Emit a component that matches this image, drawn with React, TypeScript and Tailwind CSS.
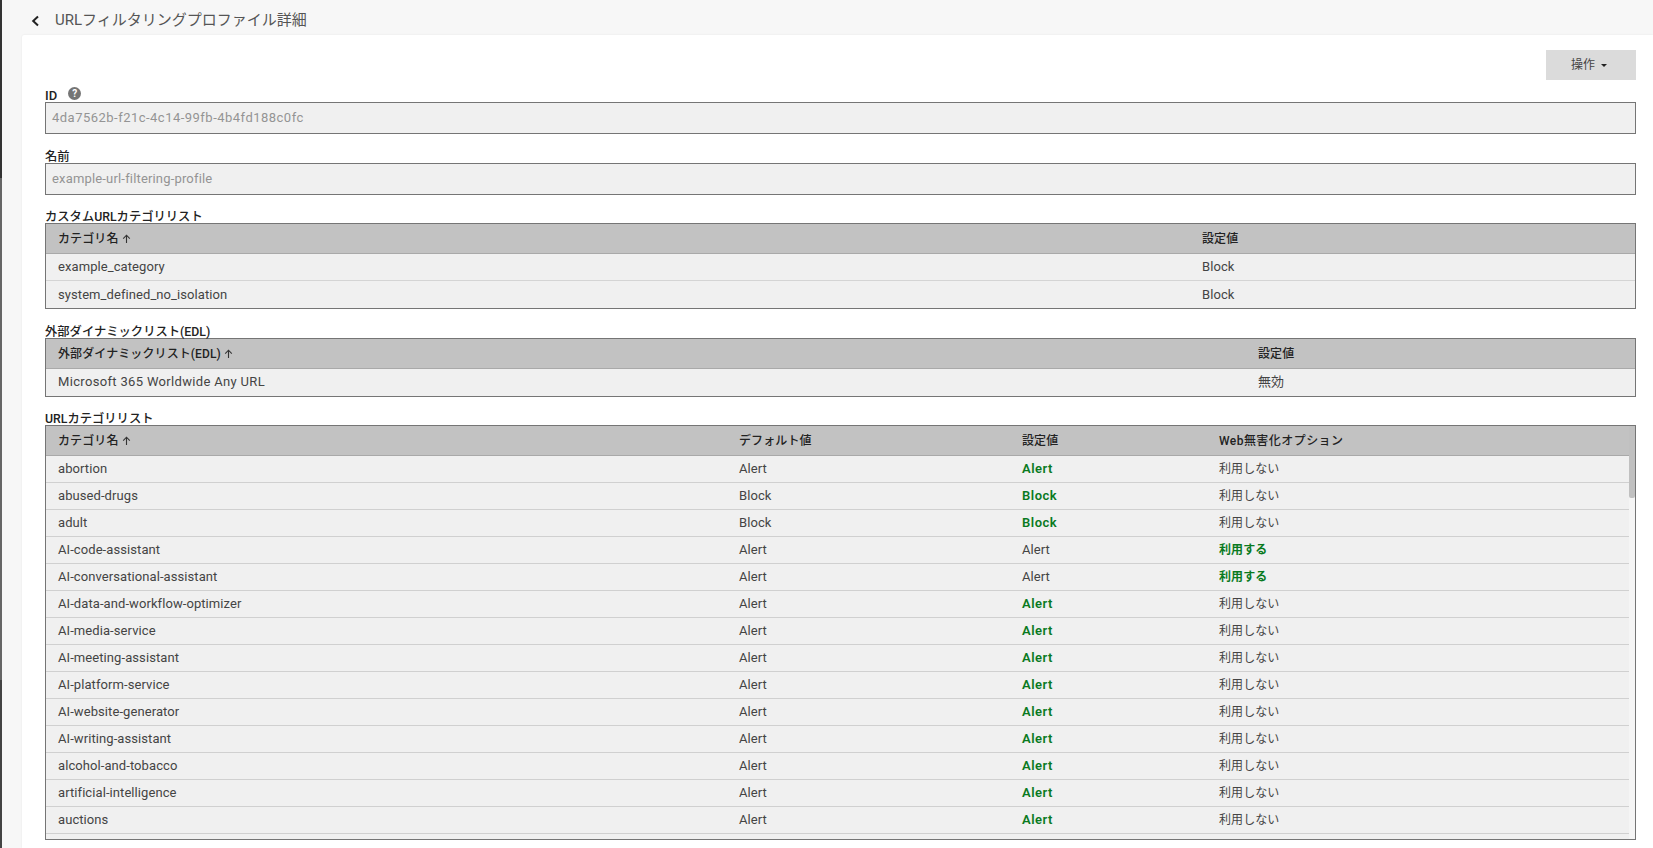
const rows: [string, string, string, boolean, string, boolean][] = [
  ["abortion", "Alert", "Alert", true, "利用しない", false],
  ["abused-drugs", "Block", "Block", true, "利用しない", false],
  ["adult", "Block", "Block", true, "利用しない", false],
  ["AI-code-assistant", "Alert", "Alert", false, "利用する", true],
  ["AI-conversational-assistant", "Alert", "Alert", false, "利用する", true],
  ["AI-data-and-workflow-optimizer", "Alert", "Alert", true, "利用しない", false],
  ["AI-media-service", "Alert", "Alert", true, "利用しない", false],
  ["AI-meeting-assistant", "Alert", "Alert", true, "利用しない", false],
  ["AI-platform-service", "Alert", "Alert", true, "利用しない", false],
  ["AI-website-generator", "Alert", "Alert", true, "利用しない", false],
  ["AI-writing-assistant", "Alert", "Alert", true, "利用しない", false],
  ["alcohol-and-tobacco", "Alert", "Alert", true, "利用しない", false],
  ["artificial-intelligence", "Alert", "Alert", true, "利用しない", false],
  ["auctions", "Alert", "Alert", true, "利用しない", false],
];

const font = { fontFamily: '"Roboto","Noto Sans CJK JP",sans-serif' };

function Arrow() {
  return (
    <svg width="9" height="10" viewBox="0 0 9 10" className="ml-[3px] inline-block align-[-1px] text-[#333]">
      <path d="M4.5 9V1.5M1.2 4.6 4.5 1.2 7.8 4.6" fill="none" stroke="currentColor" strokeWidth="1.1" />
    </svg>
  );
}

function Label({ children }: { children: React.ReactNode }) {
  return <div className="h-[14px] text-[12.3px] leading-[16px] font-medium text-[#222]">{children}</div>;
}

function Field({ value, spacing }: { value: string; spacing: string }) {
  return (
    <div className={`flex h-[32px] items-center border border-[#757575] bg-[#f0f0f0] pl-[6px] text-[13px] text-[#949494] ${spacing}`}>
      {value}
    </div>
  );
}

function Simple({ cols, head, data, spaced }: { cols: string; head: string; data: string[][]; spaced?: boolean }) {
  return (
    <div className="border border-[#757575] bg-[#f0f0f0] text-[13px] tracking-[0.08px] text-[#444]">
      <div className={`grid h-[30px] items-center border-b border-[#a9a9a9] bg-[#c2c2c2] pl-[12px] pt-[1px] text-[12px] font-medium tracking-[0.1px] text-[#222] ${cols}`}>
        <div>{head}<Arrow /></div>
        <div>設定値</div>
      </div>
      {data.map((r, i) => (
        <div key={r[0]} className={`grid h-[27px] items-center pl-[12px] ${cols} ${i < data.length - 1 ? "border-b border-[#d4d4d4]" : ""} ${spaced ? "pb-[2px]" : ""}`}>
          <div className={spaced ? "tracking-[0.33px]" : ""}>{r[0]}</div>
          <div>{r[1]}</div>
        </div>
      ))}
    </div>
  );
}

export default function App() {
  return (
    <div className="flex h-[848px] w-[1653px] overflow-hidden bg-[#f7f7f7]" style={font}>
      <div className="flex w-[2px] shrink-0 flex-col">
        <div className="h-[178px] bg-[#333]" />
        <div className="h-[502px] bg-[#666]" />
        <div className="flex-1 bg-[#444]" />
      </div>
      <div className="flex min-w-0 flex-1 flex-col">
        <header className="flex h-[35px] shrink-0 items-center pl-[28px] pt-[5px] text-[15px] text-[#555]">
          <svg width="10" height="12" viewBox="0 0 10 12" className="mr-[15px] mt-[2px] text-[#222]">
            <path d="M8 1.5 3.2 6 8 10.5" fill="none" stroke="currentColor" strokeWidth="2" />
          </svg>
          <span>URLフィルタリングプロファイル詳細</span>
        </header>
        <main className="ml-[20px] flex-1 rounded-tl-[2px] bg-white pl-[23px] pr-[17px] pt-[15px] shadow-[0_0_2px_rgba(0,0,0,0.08)]">
          <div className="flex h-[30px] justify-end">
            <button className="flex w-[90px] items-center justify-center gap-[6px] bg-[#dbdbdb] pr-[4px] text-[12px] text-[#444]">
              操作
              <span className="h-0 w-0 border-x-[3px] border-t-[3px] border-x-transparent border-t-[#222]" />
            </button>
          </div>
          <div className="mt-[8px] flex h-[14px] items-start">
            <div className="h-[14px] pt-[1px] text-[13px] leading-[14px] font-medium text-[#222]">ID</div>
            <span className="ml-[11px] mt-[-1px] flex h-[13px] w-[13px] items-center justify-center rounded-full bg-[#757575] text-[10px] font-bold leading-none text-white">?</span>
          </div>
          <Field value="4da7562b-f21c-4c14-99fb-4b4fd188c0fc" spacing="tracking-[0.48px]" />
          <div className="mt-[15px]"><Label>名前</Label></div>
          <Field value="example-url-filtering-profile" spacing="tracking-[0.17px]" />
          <div className="mt-[14px]"><Label>カスタムURLカテゴリリスト</Label></div>
          <Simple cols="grid-cols-[1144px_1fr]" head="カテゴリ名" data={[["example_category", "Block"], ["system_defined_no_isolation", "Block"]]} />
          <div className="mt-[15px]"><Label>外部ダイナミックリスト(EDL)</Label></div>
          <Simple cols="grid-cols-[1200px_1fr]" head="外部ダイナミックリスト(EDL)" data={[["Microsoft 365 Worldwide Any URL", "無効"]]} spaced />
          <div className="mt-[14px]"><Label>URLカテゴリリスト</Label></div>
          <div className="relative h-[415px] overflow-hidden border border-[#757575] bg-[#f0f0f0] text-[13px] tracking-[0.08px] text-[#444]">
            <div className="grid h-[30px] grid-cols-[681px_283px_197px_1fr] items-center border-b border-[#a9a9a9] bg-[#c2c2c2] pl-[12px] pt-[1px] text-[12px] font-medium tracking-[0.1px] text-[#222]">
              <div>カテゴリ名<Arrow /></div>
              <div>デフォルト値</div>
              <div>設定値</div>
              <div className="tracking-[0.45px]">Web無害化オプション</div>
            </div>
            <div className="mr-[6px]">
              {rows.map((r) => (
                <div key={r[0]} className="grid h-[27px] grid-cols-[681px_283px_197px_1fr] items-center border-b border-[#d0d0d0] pl-[12px]">
                  <div>{r[0]}</div>
                  <div>{r[1]}</div>
                  <div className={r[3] ? "text-[13px] font-semibold tracking-[0.5px] text-[#0a7a1f]" : ""}>{r[2]}</div>
                  <div className={r[5] ? "text-[12px] font-bold text-[#0a7a1f]" : "text-[12px]"}>{r[4]}</div>
                </div>
              ))}
            </div>
            <div className="absolute bottom-0 right-0 top-0 w-[6px] bg-[#f5f5f5]">
              <div className="h-[72px] w-[6px] rounded-b-[2px] bg-[#c0c0c0]" />
            </div>
          </div>
        </main>
      </div>
    </div>
  );
}
